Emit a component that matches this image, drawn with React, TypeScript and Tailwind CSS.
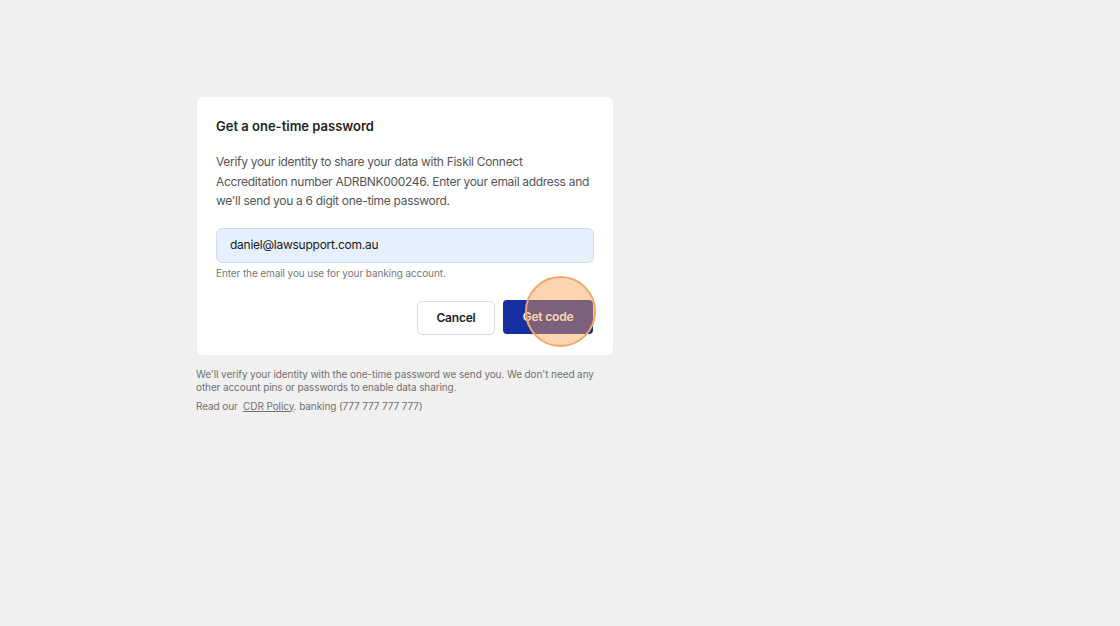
import React from "react";

export default function App() {
  return (
    <div
      className="min-h-[626px] w-full bg-[#f0f0f0] pl-[197px] pt-[97px]"
      style={{ fontFamily: "Inter, 'Noto Sans', sans-serif" }}
    >
      <div className="w-[416px]">
        <div className="rounded-[6px] bg-white px-[19px] pb-[20px] pt-[20px]">
          <h1 className="text-[13px] font-semibold leading-[18px] text-[#1f1f1f]">
            Get a one-time password
          </h1>
          <p className="mt-[17px] text-[12px] leading-[19.5px] tracking-[-0.3px] text-[#555]">
            Verify your identity to share your data with Fiskil Connect Accreditation number
            ADRBNK000246. Enter your email address and we'll send you a 6 digit one-time
            password.
          </p>
          <div className="mt-[17px] flex h-[35px] items-center rounded-[6px] border border-[#cfdcf0] bg-[#e6effc] px-[13px] text-[12px] tracking-[-0.25px] text-[#1a1a1a]">
            daniel@lawsupport.com.au
          </div>
          <p className="mt-[3px] text-[10px] leading-[14px] tracking-[-0.1px] text-[#777]">
            Enter the email you use for your banking account.
          </p>
          <div className="mt-[21px] flex justify-end gap-[8px] pr-[1px]">
            <button className="h-[34px] w-[78px] rounded-[5px] border border-[#ddd] bg-white text-[12px] font-semibold tracking-[-0.2px] text-[#222]">
              Cancel
            </button>
            <div className="relative">
              <button className="-mt-[1px] h-[34px] w-[90px] rounded-[4px] bg-[#152ea0] text-[12px] font-semibold tracking-[-0.2px] text-white">
                Get code
              </button>
              <div className="pointer-events-none absolute left-[22px] top-[-25px] h-[71px] w-[71px] rounded-full border-[2px] border-[#f0a868] bg-[#f8a050]/45" />
            </div>
          </div>
        </div>
        <div className="-ml-[1px] mt-[13px] pr-[4px] text-[10px] leading-[13px] tracking-[-0.1px] text-[#707070]">
          <p>
            We'll verify your identity with the one-time password we send you. We don't need any
            other account pins or passwords to enable data sharing.
          </p>
          <p className="mt-[6px]">
            Read our&nbsp; <span className="underline">CDR Policy</span>. banking (777 777 777 777)
          </p>
        </div>
      </div>
    </div>
  );
}
